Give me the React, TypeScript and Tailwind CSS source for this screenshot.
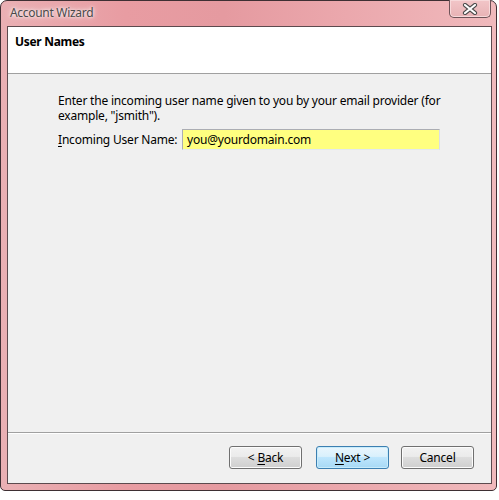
import React from "react";

const font = { fontFamily: '"Noto Sans", "Open Sans", sans-serif' };

function Btn({ children, def }: { children: React.ReactNode; def?: boolean }) {
  return (
    <div
      className={
        "w-[73px] h-[23px] rounded-[3px] border flex items-center justify-center text-[12px] tracking-[-0.2px] text-black " +
        (def
          ? "border-[#3c7fb1] bg-[linear-gradient(#eaf6fd_0%,#d9f0fc_45%,#bee6fd_50%,#a7d9f5_100%)] shadow-[inset_0_0_0_1px_#c8ecfb]"
          : "border-[#707070] bg-[linear-gradient(#f2f2f2_0%,#ebebeb_45%,#dddddd_50%,#cfcfcf_100%)] shadow-[inset_0_0_0_1px_#fcfcfc]")
      }
    >
      {children}
    </div>
  );
}

export default function App() {
  return (
    <div className="w-[499px] h-[500px] bg-white" style={font}>
      <div className="w-[497px] h-[491px] rounded-t-[7px] rounded-b-[5px] border border-[#3e2f33] bg-[linear-gradient(90deg,#eab0b4_0%,#e89ca2_25%,#e59aa0_45%,#eba8ad_70%,#f0b9bc_100%)] flex flex-col">
        <div className="h-[25px] flex items-start">
          <div className="pl-[9px] pt-[4px] text-[12px] leading-[16px] tracking-[-0.3px] text-[#4a4a4a] [text-shadow:0_0_6px_#ffffff,0_0_3px_#ffffff]">
            Account Wizard
          </div>
          <div className="ml-auto mr-[5px] mt-[-1px] w-[42px] h-[18px] rounded-b-[5px] border border-[#6e5358] border-t-0 bg-[linear-gradient(#f2c6c8,#e8b2b5)] shadow-[inset_0_0_0_1px_#f7d9da] flex items-center justify-center">
            <svg width="16" height="12" viewBox="0 0 16 12">
              <path
                d="M3 2 L13 10 M13 2 L3 10"
                stroke="#4a4a4a"
                strokeWidth="4.2"
                strokeLinecap="round"
              />
              <path
                d="M3 2 L13 10 M13 2 L3 10"
                stroke="#ffffff"
                strokeWidth="2.2"
                strokeLinecap="round"
              />
            </svg>
          </div>
        </div>
        <div className="flex-1 pl-[6px] pr-[4px] pb-[6px] flex">
          <div className="flex-1 border border-[#5c4a4e] bg-[#f0f0f0] flex flex-col">
            <div className="h-[47px] bg-white border-b border-[#a0a0a0] pl-[7px] pt-[7px]">
              <div className="text-[12px] leading-[16px] font-bold tracking-[-0.3px] text-black">User Names</div>
            </div>
            <div className="flex-1 pl-[50px] pt-[19px] flex flex-col">
              <div className="w-[400px] text-[12px] leading-[15px] tracking-[-0.2px] text-black">
                Enter the incoming user name given to you by your email provider (for example, "jsmith").
              </div>
              <div className="mt-[6px] flex items-center">
                <div className="w-[124px] text-[12px] tracking-[-0.2px] text-black">
                  <span className="underline underline-offset-2">I</span>ncoming User Name:
                </div>
                <div className="w-[258px] h-[21px] border border-[#abadb3] border-b-[#e3e9ef] border-r-[#dbdfe6] bg-[#ffff80] pl-[4px] flex items-center text-[12px] tracking-[-0.2px] text-black">
                  you@yourdomain.com
                </div>
              </div>
            </div>
            <div className="h-[51px] border-t border-[#a0a0a0] flex items-start justify-end pt-[13px] pr-[17px] gap-[12px] shadow-[inset_0_1px_0_#ffffff]">
              <div className="flex gap-[14px]">
                <Btn>
                  &lt; <span className="underline underline-offset-2 ml-[3px]">B</span>ack
                </Btn>
                <Btn def>
                  <span className="underline underline-offset-2">N</span>ext &gt;
                </Btn>
              </div>
              <Btn>Cancel</Btn>
            </div>
          </div>
        </div>
      </div>
    </div>
  );
}
